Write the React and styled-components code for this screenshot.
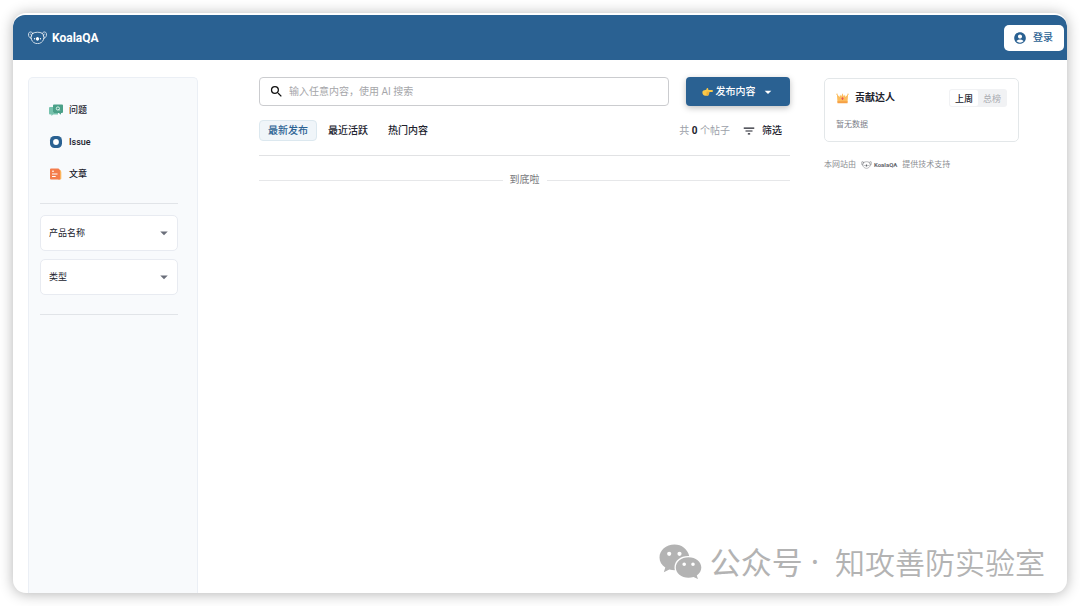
import React from "react";
import styled, { createGlobalStyle } from "styled-components";
import { MdSearch, MdFilterList, MdAccountCircle, MdArrowDropDown } from "react-icons/md";

const GlobalStyle = createGlobalStyle`
  *, *::before, *::after { box-sizing: border-box; }
  body {
    margin: 0;
    background: #fff;
    color: #21222d;
    font-family: Roboto, "Noto Sans CJK SC", sans-serif;
    font-size: 10px;
    line-height: 16px;
  }
  button, input, select { font: inherit; color: inherit; margin: 0; }
  button { cursor: pointer; border: 0; background: none; padding: 0; }
  svg { display: block; flex: none; }
`;

const Page = styled.div`
  min-height: 100vh;
  padding: 13px;
  display: flex;
`;

const Frame = styled.div`
  position: relative;
  flex: 1;
  display: flex;
  flex-direction: column;
  padding-top: 2px;
  border-radius: 13px;
  background: #fff;
  box-shadow: 0 1px 14px rgba(0, 0, 0, 0.3);
  overflow: hidden;
`;

const Header = styled.header`
  display: flex;
  align-items: center;
  justify-content: space-between;
  height: 45px;
  padding: 0 3px 0 15px;
  border-radius: 12px 12px 0 0;
  background: #2a6192;
`;

const Brand = styled.a`
  display: inline-flex;
  align-items: center;
  gap: ${(p) => (p.$small ? 2 : 5)}px;
  color: ${(p) => (p.$small ? "#63666c" : "#fff")};
  font-size: ${(p) => (p.$small ? 6 : 12)}px;
  font-weight: 700;
  text-decoration: none;
`;

const LoginButton = styled.button`
  display: flex;
  align-items: center;
  gap: 6px;
  height: 26px;
  padding: 0 11px 0 9px;
  border-radius: 5px;
  background: #fff;
  color: #2a6192;
  line-height: 18px;
  font-weight: 500;
`;

const Body = styled.div`
  flex: 1;
  display: flex;
  padding: 17px 48px 0 15px;
`;

const Sidebar = styled.aside`
  flex: 0 0 170px;
  padding: 16px 19px 0 11px;
  border: 1px solid #ebeff5;
  border-bottom: 0;
  border-radius: 5px 5px 0 0;
  background: #f8fafc;
`;

const Nav = styled.nav`
  display: flex;
  flex-direction: column;
  padding-bottom: 13px;
  border-bottom: 1px solid #e1e4e8;
`;

const NavLink = styled.a`
  display: flex;
  align-items: center;
  gap: 6px;
  height: 32px;
  padding-left: 9px;
  color: #21222d;
  font-size: 9px;
  font-weight: 500;
  text-decoration: none;
`;

const Filters = styled.div`
  display: flex;
  flex-direction: column;
  gap: 8px;
  padding: 11px 0 19px;
  border-bottom: 1px solid #e1e4e8;
`;

const SelectBox = styled.div`
  position: relative;
  height: 36px;
  svg {
    position: absolute;
    right: 5px;
    top: 9px;
    color: #6b6f7b;
    pointer-events: none;
  }
`;

const Select = styled.select`
  appearance: none;
  width: 100%;
  height: 100%;
  padding: 0 8px;
  border: 1px solid #e8ebf1;
  border-radius: 5px;
  background: #fff;
  font-size: 9px;
`;

const Main = styled.main`
  flex: 1;
  min-width: 0;
  margin: 0 34px 0 61px;
`;

const SearchRow = styled.div`
  display: flex;
  gap: 17px;
`;

const SearchBox = styled.label`
  flex: 1;
  display: flex;
  align-items: center;
  gap: 5px;
  height: 29px;
  padding: 0 9px;
  border: 1px solid #cbcccf;
  border-radius: 4px;
`;

const SearchInput = styled.input`
  flex: 1;
  min-width: 0;
  padding: 0;
  border: 0;
  outline: 0;
  background: none;
  &::placeholder { color: #a5a6a9; opacity: 1; }
`;

const PublishButton = styled.button`
  display: flex;
  align-items: center;
  justify-content: center;
  width: 104px;
  height: 29px;
  padding-left: 1px;
  border-radius: 4px;
  background: #2a6192;
  color: #fff;
  font-weight: 500;
  box-shadow: 0 2px 6px rgba(0, 0, 0, 0.25);
  span { margin: 0 4px 0 3px; }
`;

const Toolbar = styled.div`
  display: flex;
  align-items: center;
  justify-content: space-between;
  padding: 14px 8px 14px 0;
  border-bottom: 1px solid #e1e2e4;
  line-height: 18px;
`;

const Tabs = styled.div`
  display: flex;
  gap: 2px;
`;

const Tab = styled.button`
  height: 21px;
  padding: 0 8px;
  border: 1px solid ${(p) => (p.$active ? "#dce8ef" : "transparent")};
  border-radius: 4px;
  background: ${(p) => (p.$active ? "#f0f5f9" : "none")};
  color: ${(p) => (p.$active ? "#2a6192" : "#21222d")};
  font-weight: 500;
`;

const Tools = styled.div`
  display: flex;
  align-items: center;
  gap: 12px;
`;

const Count = styled.span`
  color: #9c9fa9;
  b { color: #21222d; font-weight: 700; }
`;

const FilterButton = styled.button`
  display: flex;
  align-items: center;
  gap: 6px;
  font-weight: 500;
`;

const EndMark = styled.div`
  display: flex;
  align-items: center;
  gap: 7px;
  padding-top: 16px;
  color: #77787c;
  &::before, &::after { content: ""; flex: 1; height: 1px; background: #e6e7e9; }
`;

const Aside = styled.aside`
  flex: 0 0 195px;
  padding-top: 1px;
`;

const Card = styled.section`
  height: 64px;
  padding: 10px 11px;
  border: 1px solid #e3e7e9;
  border-radius: 5px;
`;

const CardHead = styled.div`
  display: flex;
  align-items: center;
  gap: 6px;
  height: 18px;
  line-height: 18px;
`;

const CardTitle = styled.h2`
  flex: 1;
  margin: 0;
  font-size: 10px;
  font-weight: 700;
`;

const Segment = styled.div`
  display: flex;
  padding: 1px;
  border-radius: 3px;
  background: #f1f2f4;
`;

const SegmentButton = styled.button`
  width: 28px;
  height: 16px;
  border-radius: 2px;
  background: ${(p) => (p.$active ? "#fff" : "none")};
  color: ${(p) => (p.$active ? "#21222d" : "#a9abb1")};
  font-size: 9px;
  font-weight: ${(p) => (p.$active ? 500 : 400)};
`;

const Empty = styled.p`
  margin: 10px 0 0;
  color: #7c7f88;
  font-size: 8px;
`;

const Support = styled.div`
  display: flex;
  align-items: center;
  gap: 5px;
  padding-top: 15px;
  color: #8b8d92;
  font-size: 8px;
`;

const Watermark = styled.div`
  position: absolute;
  right: 22px;
  bottom: 10px;
  display: flex;
  align-items: center;
  gap: 8px;
  color: #b3b3b3;
  font-family: "Noto Sans CJK SC", sans-serif;
  font-size: 31px;
  line-height: 44px;
  white-space: nowrap;
`;

const Dot = styled.span`
  margin-right: 8px;
  font-family: "Noto Sans", sans-serif;
`;

const Account = styled.span`
  font-size: 30px;
  font-weight: 350;
`;

function Koala({ width }) {
  return (
    <svg width={width} height={(width * 14) / 20} viewBox="0 0 20 14" fill="none" stroke="currentColor" strokeWidth=".8" strokeLinecap="round" strokeLinejoin="round">
      <path d="M5 2.400C3.900.5 1.200.4.6 2.800.1 4.900 1.400 7.300 3.400 7.900M15 2.400c1.100-1.900 3.800-2 4.400.4.5 2.100-.8 4.500-2.800 5.100" />
      <path d="M5 2.400C7.900.9 12.100.9 15 2.400c1.500 1.900 2.200 4.200 1.500 6.200C15.500 11.600 13 13.300 10 13.300s-5.500-1.700-6.500-4.700C2.800 6.600 3.500 4.300 5 2.400z" />
      <path d="M2.300 3.300c1-.4 1.700.2 1.500 1.600-.1.700-.5 1.300-.9 1.600M17.700 3.300c-1-.4-1.700.2-1.500 1.600.1.700.5 1.300.9 1.600" strokeWidth=".6" />
      <path d="M10 6.200c.9 0 1.600.9 1.700 2 .1 1.100-.7 2-1.700 2s-1.800-.9-1.700-2c.1-1.100.8-2 1.700-2z" fill="currentColor" stroke="none" />
      <circle cx="6.900" cy="8.200" r=".7" fill="currentColor" stroke="none" />
      <circle cx="13.100" cy="8.200" r=".7" fill="currentColor" stroke="none" />
    </svg>
  );
}

function QuestionIcon() {
  return (
    <svg width="14" height="12" viewBox="0 0 14 12">
      <path d="M1 3h3v6h5v1.500H4L2.500 12v-1.500H1a1 1 0 0 1-1-1V4a1 1 0 0 1 1-1z" fill="#76c2ad" />
      <path d="M5 .5h8a1 1 0 0 1 1 1v6.500a1 1 0 0 1-1 1h-1v1.800L9.800 9H5a1 1 0 0 1-1-1V1.500a1 1 0 0 1 1-1z" fill="#4aa088" />
      <circle cx="8.900" cy="4.500" r="1.600" fill="none" stroke="#e8f7f2" strokeWidth=".9" />
      <path d="M9.300 5l1.300 1.400" stroke="#e8f7f2" strokeWidth=".9" />
    </svg>
  );
}

function IssueIcon() {
  return (
    <svg width="14" height="12" viewBox="0 0 14 12">
      <rect x="1" y="0" width="12" height="12" rx="4.500" fill="#2a6192" />
      <circle cx="7" cy="6" r="2.900" fill="#fff" />
    </svg>
  );
}

function ArticleIcon() {
  return (
    <svg width="14" height="12" viewBox="0 0 14 12">
      <path d="M9 2h2.500L12.300 4v6.500a1 1 0 0 1-1 1H9z" fill="#fbb45c" />
      <path d="M2 .5h7.500L11 2v9.500H2a1 1 0 0 1-1-1v-9a1 1 0 0 1 1-1z" fill="#f47d4c" />
      <path d="M3 3.200h2M3 6h5.500M3 8.500h3.700" stroke="#fff" strokeWidth="1" />
    </svg>
  );
}

function PointingHand() {
  return (
    <svg width="11" height="10" viewBox="0 0 11 10">
      <path d="M10.300 3.100H6.400L6.200 1.700C6 .9 5 .8 4.700 1.500L4.200 2.700 1.500 3.600C.7 3.900.4 4.600.4 5.500c0 1.900 1.100 3.200 2.900 3.200h2.200c.8 0 1.300-.5 1.200-1.100.5-.3.600-.8.400-1.200.3-.3.400-.9.200-1.300h3c.8 0 .8-2 0-2z" fill="#fbc948" />
      <path d="M4.600 5.100h2.500M4.500 6.400h2.300M4.600 7.600h1.900" stroke="#e0962c" strokeWidth=".6" />
    </svg>
  );
}

function CrownIcon() {
  return (
    <svg width="13" height="12" viewBox="0 0 13 12">
      <path d="M.9 2.200L3.700 5 4 2.600l1.200 2L6.500 1.200 7.800 4.600 9 2.600 9.300 5l2.800-2.800-.6 8.200h-10z" fill="#fcbc5c" />
      <path d="M1.400 9.200h10.200l-.1 2h-10z" fill="#f6a045" />
      <circle cx="1" cy="2.300" r=".8" fill="#fcc878" />
      <circle cx="12" cy="2.300" r=".8" fill="#fcc878" />
      <path d="M6.500 5l1.200 1.600-1.200 1.700-1.200-1.700z" fill="#e8505b" />
    </svg>
  );
}

function WechatIcon() {
  return (
    <svg width="43" height="35" viewBox="0 0 43 35" fill="currentColor">
      <path fillRule="evenodd" d="M15.500.5C7 .5.500 6.200.500 13.500c0 4.100 2.200 7.700 5.800 10.100L4.800 28.200l5.500-2.800c1.900.5 3.700.8 5.600.8-.300-1-.400-2-.400-3C15.500 16.800 21.500 12 29 12h1.200C28.800 5.300 22.700.5 15.500.5zM10.200 7.700a2.100 2.100 0 1 1 0 4.200 2.100 2.100 0 0 1 0-4.200zM20.500 7.700a2.100 2.100 0 1 1 0 4.200 2.100 2.100 0 0 1 0-4.200z" />
      <path fillRule="evenodd" d="M29.500 13.200c7.300 0 12.800 4.600 12.800 10.300 0 3.200-1.700 6-4.500 8l1.200 3.600-4.400-2.200c-1.700.5-3.400.8-5.100.8-7.200 0-12.700-4.500-12.700-10.200s5.500-10.300 12.700-10.300zM25.200 18.400a1.800 1.800 0 1 0 0 3.600 1.800 1.800 0 0 0 0-3.600zM34 18.400a1.800 1.800 0 1 0 0 3.600 1.800 1.800 0 0 0 0-3.600z" />
    </svg>
  );
}

const NAV = [
  { label: "问题", Icon: QuestionIcon },
  { label: "Issue", Icon: IssueIcon },
  { label: "文章", Icon: ArticleIcon },
];
const FILTERS = ["产品名称", "类型"];
const TABS = ["最新发布", "最近活跃", "热门内容"];

export default function App() {
  return (
    <Page>
      <GlobalStyle />
      <Frame>
        <Header>
          <Brand href="#">
            <Koala width={19} />
            KoalaQA
          </Brand>
          <LoginButton>
            <MdAccountCircle size={14} />
            登录
          </LoginButton>
        </Header>
        <Body>
          <Sidebar>
            <Nav>
              {NAV.map(({ label, Icon }) => (
                <NavLink href="#" key={label}>
                  <Icon />
                  {label}
                </NavLink>
              ))}
            </Nav>
            <Filters>
              {FILTERS.map((name) => (
                <SelectBox key={name}>
                  <Select aria-label={name} defaultValue="">
                    <option value="">{name}</option>
                  </Select>
                  <MdArrowDropDown size={18} />
                </SelectBox>
              ))}
            </Filters>
          </Sidebar>
          <Main>
            <SearchRow>
              <SearchBox>
                <MdSearch size={15} color="#111" />
                <SearchInput type="text" aria-label="搜索" placeholder="输入任意内容，使用 AI 搜索" />
              </SearchBox>
              <PublishButton>
                <PointingHand />
                <span>发布内容</span>
                <MdArrowDropDown size={16} />
              </PublishButton>
            </SearchRow>
            <Toolbar>
              <Tabs>
                {TABS.map((name, i) => (
                  <Tab key={name} $active={i === 0}>{name}</Tab>
                ))}
              </Tabs>
              <Tools>
                <Count>共 <b>0</b> 个帖子</Count>
                <FilterButton>
                  <MdFilterList size={14} />
                  筛选
                </FilterButton>
              </Tools>
            </Toolbar>
            <EndMark>到底啦</EndMark>
          </Main>
          <Aside>
            <Card>
              <CardHead>
                <CrownIcon />
                <CardTitle>贡献达人</CardTitle>
                <Segment>
                  <SegmentButton $active>上周</SegmentButton>
                  <SegmentButton>总榜</SegmentButton>
                </Segment>
              </CardHead>
              <Empty>暂无数据</Empty>
            </Card>
            <Support>
              本网站由
              <Brand href="#" $small>
                <Koala width={11} />
                KoalaQA
              </Brand>
              提供技术支持
            </Support>
          </Aside>
        </Body>
        <Watermark>
          <WechatIcon />
          <span>公众号</span>
          <Dot>·</Dot>
          <Account>知攻善防实验室</Account>
        </Watermark>
      </Frame>
    </Page>
  );
}
